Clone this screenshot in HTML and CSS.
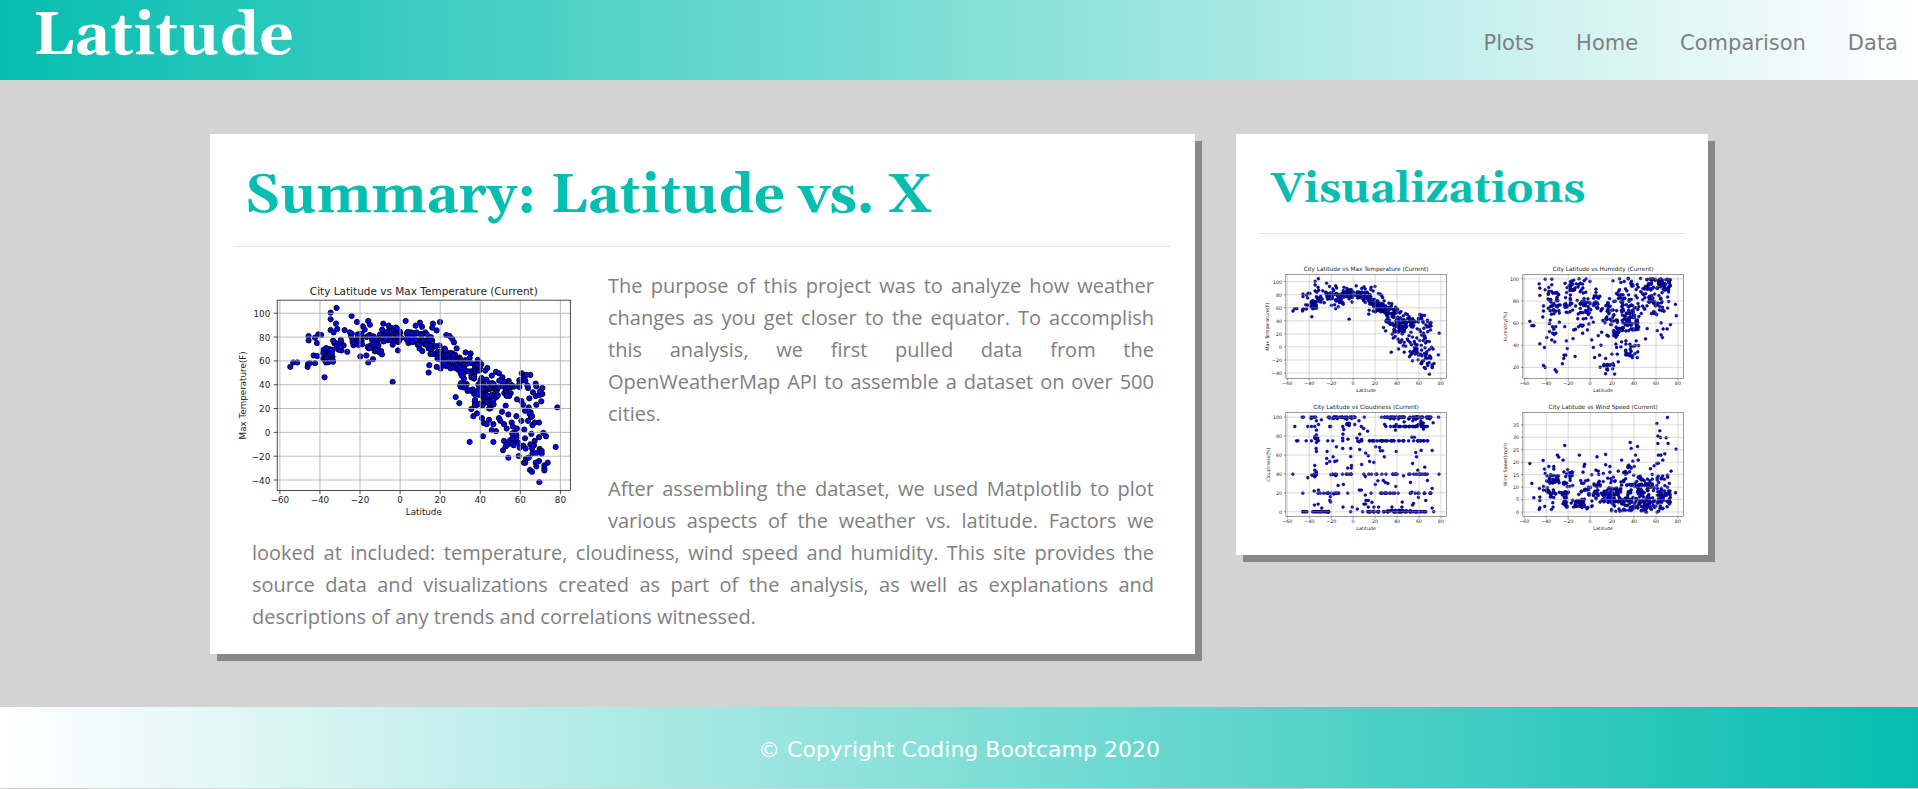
FILE: index.html
```html
<!DOCTYPE html>
<html lang="en">
<head>
  <meta charset="utf-8">
  <meta name="viewport" content="width=device-width, initial-scale=1">
  <title>Latitude</title>
  <link rel="stylesheet" href="styles.css">
</head>
<body>
  <header class="site-header">
    <a class="logo" href="#">Latitude</a>
    <nav class="site-nav">
      <a href="#">Plots</a>
      <a href="#">Home</a>
      <a href="#">Comparison</a>
      <a href="#">Data</a>
    </nav>
  </header>

  <main class="content">
    <section class="card">
      <h1 class="card-title">Summary: Latitude vs. X</h1>
      <hr class="rule">
      <div class="summary">
        <svg class="plot plot-main" data-plot="temperature" viewBox="0 0 432 288" role="img" aria-label="City Latitude vs Max Temperature"></svg>
        <p>The purpose of this project was to analyze how weather changes as you get closer to the equator. To accomplish this analysis, we first pulled data from the OpenWeatherMap API to assemble a dataset on over 500 cities.</p>
        <p>After assembling the dataset, we used Matplotlib to plot various aspects of the weather vs. latitude. Factors we looked at included: temperature, cloudiness, wind speed and humidity. This site provides the source data and visualizations created as part of the analysis, as well as explanations and descriptions of any trends and correlations witnessed.</p>
      </div>
    </section>

    <aside class="card">
      <h2 class="card-title side-title">Visualizations</h2>
      <hr class="rule">
      <div class="thumbs">
        <a href="#"><svg class="plot" data-plot="temperature" viewBox="0 0 432 288" role="img" aria-label="City Latitude vs Max Temperature"></svg></a>
        <a href="#"><svg class="plot" data-plot="humidity" viewBox="0 0 432 288" role="img" aria-label="City Latitude vs Humidity"></svg></a>
        <a href="#"><svg class="plot" data-plot="cloudiness" viewBox="0 0 432 288" role="img" aria-label="City Latitude vs Cloudiness"></svg></a>
        <a href="#"><svg class="plot" data-plot="wind" viewBox="0 0 432 288" role="img" aria-label="City Latitude vs Wind Speed"></svg></a>
      </div>
    </aside>
  </main>

  <footer class="site-footer">© Copyright Coding Bootcamp 2020</footer>
  <script src="plots.js"></script>
</body>
</html>
```

FILE: styles.css
```css
* {
  box-sizing: border-box;
}

body {
  margin: 0;
  background: #d3d3d3;
  color: #808080;
  font-family: "Open Sans", "Noto Sans", sans-serif;
}

a {
  color: inherit;
  text-decoration: none;
}

.site-header {
  display: flex;
  justify-content: space-between;
  align-items: center;
  height: 80px;
  padding: 0 20px 0 33px;
  background: linear-gradient(to right, #05beb0, #fff);
}

.logo {
  padding-bottom: 6px;
  color: #fff;
  font: bold 60px/72px Georgia, Gelasio, "Liberation Serif", serif;
}

.site-nav {
  display: flex;
  gap: 42px;
  padding-top: 5px;
  font: 21px/32px "DejaVu Sans", sans-serif;
}

.content {
  display: grid;
  grid-template-columns: 985fr 472fr;
  align-items: start;
  gap: 41px;
  padding: 54px 210px 53px;
}

.card {
  padding: 20px 24px 21px;
  background: #fff;
  box-shadow: 7px 7px #888;
}

.card-title {
  margin: 0;
  padding: 10px 11px 18px;
  color: #05beb0;
  font: bold 54px/64px Georgia, Gelasio, "Liberation Serif", serif;
}

.side-title {
  font-size: 43px;
  line-height: 51px;
}

.rule {
  height: 1px;
  margin: 0;
  border: 0;
  background: #e2e2e2;
}

.summary {
  padding: 23px 17px 0 18px;
  font-size: 20px;
  line-height: 32px;
  text-align: justify;
}

.summary p {
  margin: 0 0 43px;
}

.summary p:last-child {
  margin: 0;
}

.plot {
  display: block;
  width: 100%;
  height: auto;
  font-family: "DejaVu Sans", sans-serif;
}

.plot-main {
  float: left;
  width: 378px;
  margin-left: -22px;
}

.thumbs {
  display: grid;
  grid-template-columns: 1fr 1fr;
  gap: 0 30px;
  margin-right: -20px;
  padding-top: 24px;
}

.tick {
  fill: #222;
  font-size: 10px;
}

.plot-title {
  fill: #222;
  font-size: 12px;
}

.dot {
  fill: #00f;
  stroke: #000;
  stroke-width: 1px;
}

.grid-line {
  stroke: #b0b0b0;
  stroke-width: 1px;
}

.tick-mark,
.frame {
  fill: none;
  stroke: #333;
  stroke-width: 1px;
}

.site-footer {
  height: 81px;
  margin-bottom: 1px;
  background: linear-gradient(to left, #05beb0, #fff);
  color: #fff;
  font: 22px/86px "DejaVu Sans", sans-serif;
  text-align: center;
}
```

FILE: plots.js
```js
// Scatter plots. Each plot has a frame (left, right, top, bottom) in its own
// units, single points "x,y", and bands [x1, x2, y1, y2, count, drop] of dense
// points, where drop is how far the band falls from its left to its right end.
const AXES = { left: 54, right: 389, top: 34.5, bottom: 252 };

const PLOTS = {
  temperature: {
    title: "City Latitude vs Max Temperature (Current)",
    label: "Max Temperature(F)",
    frame: [143, 1022, 90, 658],
    ticks: { from: 100, to: -40, step: 20, first: 129, pitch: 71.1 },
    points: "182,289 191,276 203,276 234,289 235,281 240,278 252,255 263,257 256,278 262,218 256,202 237,197 237,210 266,192 275,194 303,127 303,147 321,113 319,160 303,179 312,186 323,176 345,179 361,186 366,137 382,155 400,168 405,178 416,152 421,163 285,320 489,334 416,276 430,266 392,258 410,255 353,244 461,160 477,166 498,172 528,152 558,166 571,157 577,169 610,160 631,155 608,172 621,180 587,186 457,252 505,240 489,223 570,234 578,242 599,284 597,306 621,289 633,294 650,194 660,197 668,206 673,216 681,234 708,246 723,249 720,262 744,268 755,281 773,292 799,304 808,308 818,320 786,315 767,300 770,327 780,338 678,379 689,397 720,513 760,496 791,513 799,481 786,478 725,415 738,402 731,436 742,428 757,442 763,457 771,460 778,447 791,460 817,423 836,431 828,405 808,442 812,450 823,460 831,473 846,455 860,436 862,386 875,391 880,402 886,420 897,410 903,425 907,436 895,450 908,463 915,455 928,455 850,467 862,473 884,476 905,489 886,502 875,450 941,486 949,496 928,499 915,510 978,528 983,410 935,392 920,402 899,383 918,376 930,373 938,370 910,365 895,352 893,344 918,339 920,347 938,352 931,362 869,349 876,308 886,313 902,313 883,321 880,329 887,330 836,560 820,538 828,526 836,520 841,508 823,510 852,523 865,515 870,530 881,524 888,533 902,520 913,523 907,533 930,534 936,548 936,540 920,546 908,547 867,555 883,575 889,563 897,560 887,575 928,570 918,575 920,586 954,575 944,583 944,592 944,598 901,597 907,602 929,633 904,439 900,430 890,313",
    bands: [[280, 315, 230, 280, 26], [310, 345, 205, 240, 10], [360, 398, 190, 226, 26], [408, 465, 190, 245, 26], [450, 515, 172, 215, 36], [530, 610, 178, 220, 42, 10], [595, 700, 205, 248, 58, 60], [630, 670, 250, 298, 22], [670, 740, 255, 300, 26, 20], [690, 795, 290, 350, 56, 50], [725, 795, 365, 408, 34, 8], [785, 848, 338, 380, 22], [805, 870, 328, 352, 16], [845, 865, 480, 510, 9], [735, 760, 270, 300, 9]]
  },
  humidity: {
    title: "City Latitude vs Humidity (Current)",
    label: "Humidity(%)",
    frame: [100, 583, 54, 368],
    ticks: { from: 100, to: 20, step: 20, first: 67, pitch: 66.75 },
    points: "121,195 127,208 133,208 149,82 151,95 151,117 151,263 165,274 160,182 162,149 162,164 167,68 187,68 167,100 178,93 178,105 187,85 162,328 167,334 197,341 201,347 219,323 223,307 224,297 229,297 234,277 231,254 257,301 172,244 187,251 196,257 180,226 180,202 193,219 199,231 210,198 226,211 251,247 253,221 280,231 274,206 307,251 312,274 335,267 316,304 331,297 349,307 327,238 337,228 357,240 353,237 368,294 384,294 387,317 380,264 382,274 397,257 395,272 410,254 410,264 422,264 441,254 438,268 448,268 469,248 474,217 504,223 516,200 516,236 520,244 522,218 534,218 544,205 562,178 559,144 376,354 349,353 391,67 417,67 371,73 290,67 269,67 302,75 302,158 306,184 312,198 320,98 320,108",
    bands: [[175, 215, 100, 180, 34], [180, 200, 180, 235, 5], [222, 250, 80, 172, 32], [240, 300, 68, 110, 18], [258, 305, 125, 175, 32], [255, 300, 180, 222, 10], [312, 365, 110, 165, 28], [340, 375, 160, 210, 16], [370, 405, 110, 230, 36], [395, 450, 140, 225, 74], [405, 470, 75, 135, 22], [465, 545, 67, 102, 78], [455, 540, 105, 175, 48], [372, 392, 205, 245, 12], [325, 378, 322, 345, 15], [408, 448, 270, 308, 17], [370, 460, 65, 110, 7]]
  },
  cloudiness: {
    title: "City Latitude vs Cloudiness (Current)",
    label: "Cloudiness(%)",
    frame: [106, 589, 50, 363],
    ticks: { from: 100, to: 0, step: 20, first: 64, pitch: 56.8 },
    points: "155,64 159,64 182,68 182,64 565,64 549,81 342,64 133,92 172,92 183,92 193,92 238,92 241,92 138,135 142,135 167,135 183,135 204,135 247,135 232,135 277,135 127,235 567,235 157,292 172,246 198,75 213,72 198,103 198,117 195,127 202,127 198,140 197,158 198,167 204,86 230,167 258,153 229,188 229,203 238,197 248,183 253,197 259,195 193,209 193,223 198,229 193,243 277,158 301,158 301,182 328,161 346,172 354,180 358,197 371,200 334,206 304,209 303,217 292,217 256,240 263,269 279,266 191,286 204,283 250,295 240,303 238,314 241,319 327,283 333,283 345,298 375,266 383,255 399,254 405,260 413,263 402,183 376,153 388,155 390,165 397,165 438,167 513,164 546,164 497,170 499,183 487,203 524,214 503,223 460,240 437,272 481,260 532,254 546,278 527,314 505,305 485,289 456,319 425,334 385,334 371,334 354,334 347,314 354,314 365,320 341,325 346,325 301,348 306,334 278,334 321,340 337,348 214,337 192,328 203,325 546,337 551,348 527,348 455,334 487,328 490,323 352,106 340,98 333,92 280,101 278,115 277,127 293,130 328,115 320,127 326,75 313,86 436,103 438,86 462,78 488,75 520,100 485,124 493,124 277,92 403,86 345,242",
    bands: [[187, 200, 64, 64, 3], [232, 327, 64, 64, 24], [236, 310, 66, 70, 8], [385, 544, 64, 64, 46], [400, 540, 66, 70, 12], [285, 298, 80, 90, 6], [405, 546, 92, 92, 28], [500, 520, 72, 90, 9], [193, 200, 118, 135, 3], [320, 335, 128, 138, 5], [355, 550, 135, 135, 38], [183, 200, 235, 240, 6], [240, 260, 235, 237, 6], [275, 306, 235, 235, 6], [326, 455, 235, 235, 13], [470, 545, 235, 235, 12], [185, 300, 292, 292, 14], [345, 545, 292, 292, 24], [155, 240, 348, 348, 24], [352, 500, 348, 348, 44], [400, 485, 344, 346, 18], [500, 525, 348, 348, 6]]
  },
  wind: {
    title: "City Latitude vs Wind Speed (Current)",
    label: "Wind Speed(mph)",
    frame: [100, 583, 50, 363],
    ticks: { from: 35, to: 0, step: 5, first: 87, pitch: 37.4 },
    points: "121,203 127,263 133,306 150,278 151,304 151,314 149,341 151,336 166,332 161,194 165,220 167,233 178,212 193,212 193,220 162,272 162,283 204,178 208,184 221,193 226,149 270,178 235,222 286,205 284,212 323,183 349,176 349,207 362,212 320,223 327,226 397,193 423,140 426,158 445,152 439,178 447,193 431,196 435,212 484,219 495,210 503,203 508,202 521,193 508,178 515,178 527,174 561,160 503,83 512,105 506,121 514,125 531,126 506,143 537,143 535,65 546,226 559,291 535,238 418,208 403,230 387,226 362,229 342,233 328,236 307,237 281,229 472,349 504,349 509,346 186,341 191,334 190,321",
    bands: [[170, 215, 235, 265, 24], [175, 200, 280, 305, 16], [200, 240, 288, 292, 10], [218, 250, 228, 275, 22], [218, 238, 290, 335, 18], [245, 285, 310, 335, 28], [265, 305, 245, 300, 18], [280, 310, 305, 340, 10], [312, 350, 255, 320, 34], [340, 400, 275, 320, 70], [350, 410, 230, 270, 14], [365, 430, 310, 347, 34], [400, 440, 210, 235, 8], [405, 480, 265, 320, 80], [430, 490, 235, 270, 20], [430, 500, 305, 347, 46], [480, 545, 240, 290, 26], [505, 545, 285, 320, 36], [490, 545, 315, 340, 12], [160, 180, 275, 290, 4]]
  }
};

// Repeatable random numbers, so a plot looks the same on every load.
function generator(seed) {
  let state = seed;
  return () => {
    state = (state * 16807) % 2147483647;
    return state / 2147483647;
  };
}

function minus(value) {
  return String(value).replace("-", "\u2212");
}

function draw(svg) {
  const plot = PLOTS[svg.dataset.plot];
  const [left, right, top, bottom] = plot.frame;
  const mapX = x => AXES.left + (x - left) / (right - left) * (AXES.right - AXES.left);
  const mapY = y => AXES.top + (y - top) / (bottom - top) * (AXES.bottom - AXES.top);
  const random = generator(4217);
  const points = plot.points.split(" ").map(pair => pair.split(",").map(Number));

  for (const [x1, x2, y1, y2, count, drop = 0] of plot.bands) {
    for (let i = 0; i < count; i++) {
      const along = random();
      points.push([x1 + along * (x2 - x1), y1 + random() * (y2 - y1) + along * drop]);
    }
  }

  const dots = points.map(([x, y]) =>
    `<circle class="dot" cx="${mapX(x).toFixed(1)}" cy="${mapY(y).toFixed(1)}" r="3"/>`);
  const lines = [];

  for (let lat = -60; lat <= 80; lat += 20) {
    const x = AXES.left + 3 + (lat + 60) / 20 * 45.8;
    lines.push(`<path class="grid-line" d="M${x} ${AXES.top}V${AXES.bottom}"/>`,
      `<path class="tick-mark" d="M${x} ${AXES.bottom}v4"/>`,
      `<text class="tick" x="${x}" y="266" text-anchor="middle">${minus(lat)}</text>`);
  }

  const { from, to, step, first, pitch } = plot.ticks;
  for (let value = from, i = 0; value >= to; value -= step, i++) {
    const y = mapY(first + i * pitch);
    lines.push(`<path class="grid-line" d="M${AXES.left} ${y}H${AXES.right}"/>`,
      `<path class="tick-mark" d="M${AXES.left} ${y}h-4"/>`,
      `<text class="tick" x="46" y="${y + 4}" text-anchor="end">${minus(value)}</text>`);
  }

  const middleX = (AXES.left + AXES.right) / 2;
  const middleY = (AXES.top + AXES.bottom) / 2;
  const labelX = svg.dataset.plot === "temperature" ? 18 : 20;
  svg.innerHTML = dots.join("") + lines.join("") +
    `<rect class="frame" x="${AXES.left}" y="${AXES.top}" width="${AXES.right - AXES.left}" height="${AXES.bottom - AXES.top}"/>` +
    `<text class="plot-title" x="${middleX}" y="28" text-anchor="middle">${plot.title}</text>` +
    `<text class="tick" x="${middleX}" y="280" text-anchor="middle">Latitude</text>` +
    `<text class="tick" transform="translate(${labelX} ${middleY}) rotate(-90)" text-anchor="middle">${plot.label}</text>`;
}

document.querySelectorAll("[data-plot]").forEach(draw);
```
